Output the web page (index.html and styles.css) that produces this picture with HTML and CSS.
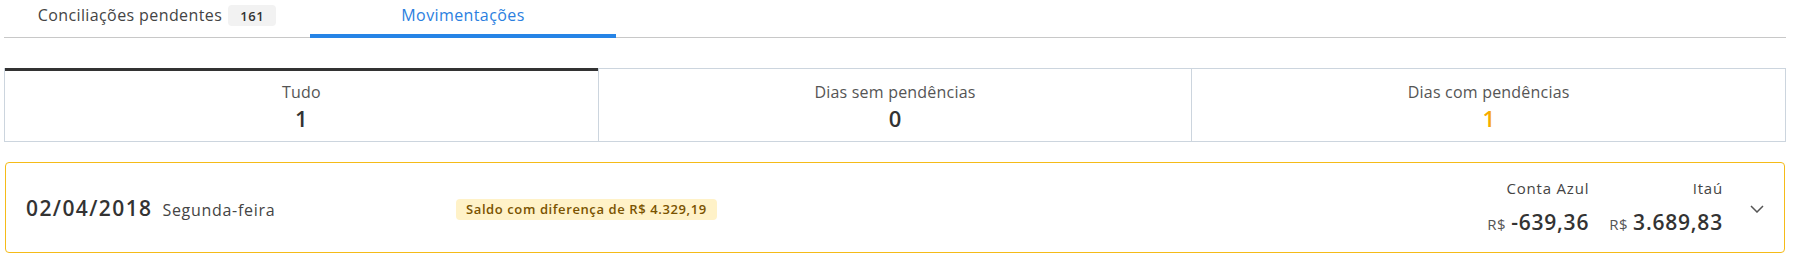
FILE: index.html
```html
<!DOCTYPE html>
<html lang="pt-BR">
<head>
<meta charset="utf-8">
<title>Movimentações</title>
<link rel="stylesheet" href="styles.css">
</head>
<body>
<div class="page">
  <nav class="tabs">
    <div class="tab">Conciliações pendentes <span class="count">161</span></div>
    <div class="tab active">Movimentações</div>
  </nav>

  <div class="filters">
    <div class="filter active">
      <div class="filter-label">Tudo</div>
      <div class="filter-value">1</div>
    </div>
    <div class="filter">
      <div class="filter-label">Dias sem pendências</div>
      <div class="filter-value">0</div>
    </div>
    <div class="filter">
      <div class="filter-label">Dias com pendências</div>
      <div class="filter-value warn">1</div>
    </div>
  </div>

  <div class="day-card">
    <div class="day-date">
      <span class="date">02/04/2018</span>
      <span class="weekday">Segunda-feira</span>
    </div>
    <span class="diff-badge">Saldo com diferença de R$ 4.329,19</span>
    <div class="balances">
      <div class="balance">
        <div class="balance-label">Conta Azul</div>
        <div class="balance-value"><span class="currency">R$</span>-639,36</div>
      </div>
      <div class="balance">
        <div class="balance-label">Itaú</div>
        <div class="balance-value"><span class="currency">R$</span>3.689,83</div>
      </div>
    </div>
    <svg class="chevron" width="14" height="8" viewBox="0 0 14 8" aria-hidden="true">
      <polyline points="1,1 7,7 13,1" fill="none" stroke="#555" stroke-width="1.5"/>
    </svg>
  </div>
</div>
</body>
</html>
```

FILE: styles.css
```css
* { box-sizing: border-box; }

body {
  margin: 0;
  background: #fff;
  font-family: "Open Sans", "Noto Sans", sans-serif;
  color: #333;
}

.page {
  width: 1782px;
  margin-left: 4px;
}

/* Tabs */
.tabs {
  display: flex;
  height: 38px;
  border-bottom: 1px solid #c8c8c8;
}

.tab {
  width: 306px;
  height: 38px;
  margin-bottom: -1px;
  display: flex;
  align-items: flex-start;
  justify-content: center;
  padding-top: 4px;
  font-size: 16px;
  line-height: 22px;
  font-weight: 500;
  letter-spacing: 0.4px;
  color: #444;
  border-bottom: 4px solid transparent;
}

.tab.active {
  color: #2b7fe0;
  border-bottom-color: #2684e6;
}

.count {
  margin-left: 6px;
  padding: 0 12px;
  height: 21px;
  line-height: 22px;
  margin-top: 1px;
  background: #f2f2f2;
  border-radius: 4px;
  font-size: 13px;
  font-weight: 600;
  letter-spacing: 0.6px;
  color: #333;
}

/* Filters */
.filters {
  display: flex;
  margin-top: 30px;
  height: 74px;
  border: 1px solid #ccd5de;
}

.filter {
  flex: 1;
  text-align: center;
  padding-top: 12px;
}

.filter + .filter {
  border-left: 1px solid #ccd5de;
}

.filter.active {
  box-shadow: 0 -1px 0 #333, inset 0 2px 0 #333;
}

.filter-label {
  font-size: 16px;
  line-height: 22px;
  letter-spacing: 0.2px;
  color: #555;
}

.filter-value {
  font-size: 22px;
  line-height: 30px;
  font-weight: 600;
  color: #333;
}

.filter-value.warn {
  color: #f6ab00;
}

/* Day card */
.day-card {
  display: flex;
  align-items: center;
  margin-top: 20px;
  margin-left: 1px;
  width: 1780px;
  height: 91px;
  padding: 0 20px 0 20px;
  border: 1px solid #f5bb18;
  border-radius: 4px;
}

.day-date {
  width: 430px;
  display: flex;
  align-items: baseline;
  gap: 10px;
  padding-top: 1px;
}

.date {
  font-size: 21px;
  font-weight: 600;
  letter-spacing: 1.4px;
  color: #333;
}

.weekday {
  font-size: 16px;
  letter-spacing: 0.7px;
  color: #444;
}

.diff-badge {
  display: inline-block;
  height: 21px;
  line-height: 21px;
  padding: 0 10px;
  border-radius: 4px;
  background: #fff2c8;
  color: #7a5300;
  font-size: 13px;
  font-weight: 600;
  letter-spacing: 0.6px;
  margin-top: 4px;
}

.balances {
  margin-left: auto;
  display: flex;
  gap: 20px;
  padding-top: 0;
}

.balance {
  text-align: right;
}

.balance-label {
  font-size: 15px;
  line-height: 20px;
  letter-spacing: 0.8px;
  color: #444;
}

.balance-value {
  margin-top: 10px;
  font-size: 21px;
  line-height: 28px;
  font-weight: 600;
  letter-spacing: 0.8px;
  color: #333;
}

.currency {
  font-size: 15px;
  font-weight: 400;
  letter-spacing: 0.5px;
  color: #555;
  margin-right: 5px;
}

.chevron {
  margin-left: 27px;
  margin-top: 2px;
  flex: none;
}
```
